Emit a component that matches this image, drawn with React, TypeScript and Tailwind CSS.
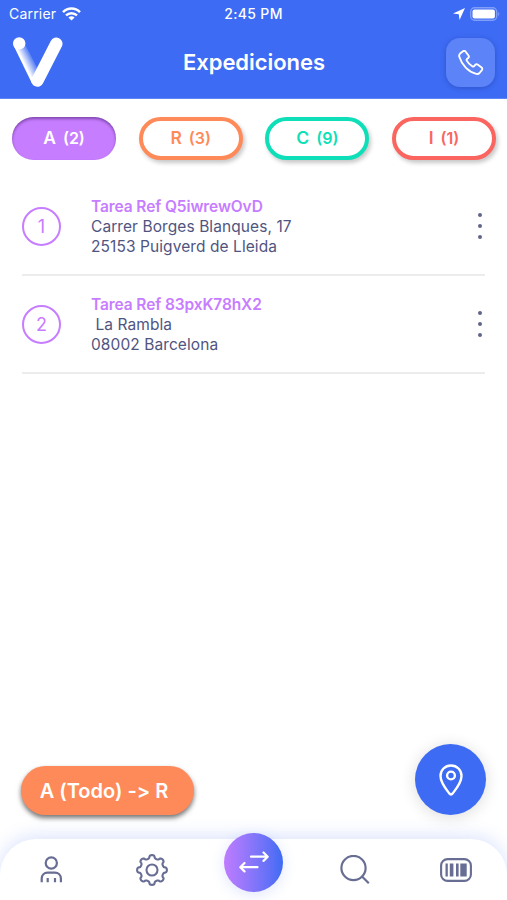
import { useState } from 'react'
import clsx from 'clsx'

interface Task {
  id: number
  ref: string
  street: string
  city: string
}

const filters = [
  { key: 'A', count: 2, color: 'border-[#c77dff] text-[#c77dff]' },
  { key: 'R', count: 3, color: 'border-[#ff8a59] text-[#ff8a59]' },
  { key: 'C', count: 9, color: 'border-[#0fdfb9] text-[#0fdfb9]' },
  { key: 'I', count: 1, color: 'border-[#fb6560] text-[#fb6560]' },
]

const tasks: Task[] = [
  { id: 1, ref: 'Q5iwrewOvD', street: 'Carrer Borges Blanques, 17', city: '25153 Puigverd de Lleida' },
  { id: 2, ref: '83pxK78hX2', street: ' La Rambla', city: '08002 Barcelona' },
]

// Scalloped ring with eight lobes
const gearPath =
  Array.from({ length: 128 }, (_, i) => {
    const t = (i / 128) * Math.PI * 2
    const angle = t + 0.045 * Math.sin(16 * t)
    const radius = 13.3 + 1.6 * Math.cos(8 * t)
    const x = 17 + radius * Math.sin(angle)
    const y = 17 - radius * Math.cos(angle)
    return `${i === 0 ? 'M' : 'L'}${x.toFixed(2)} ${y.toFixed(2)}`
  }).join('') + 'z'

function StatusBar() {
  return (
    <div className="grid grid-cols-3 items-center h-7 px-[9px] text-[14px] leading-none">
      <div className="flex items-center gap-[6px]">
        <span className="tracking-[0.2px]">Carrier</span>
        <svg width="19" height="14" viewBox="0 0 19 14" fill="none" stroke="currentColor" strokeWidth="2.5">
          <path d="M1 5.1C5.8.3 13.2.3 18 5.1" />
          <path d="M4 8.4c3.2-3 7.8-3 11 0" />
          <path d="M9.5 13.6 6.4 10.5c1.8-1.7 4.4-1.7 6.2 0z" fill="currentColor" stroke="none" />
        </svg>
      </div>
      <span className="text-center text-[14px] font-medium tracking-[0.35px] whitespace-nowrap">2:45 PM</span>
      <div className="flex items-center justify-end gap-[5px]">
        <svg width="12" height="12" viewBox="0 0 11 11" fill="currentColor">
          <path d="M11 0 6 11 5.3 5.7 0 5z" />
        </svg>
        <svg width="30" height="14" viewBox="0 0 30 14" className="-mr-[2px]">
          <rect x=".7" y=".7" width="26" height="12.6" rx="4" fill="none" stroke="#fff" strokeOpacity=".35" strokeWidth="1.4" />
          <rect x="2.5" y="2.4" width="22.4" height="9.2" rx="2" fill="#fff" />
          <path d="M28.3 5v4.2c1.3-.7 1.3-3.5 0-4.2z" fill="#fff" fillOpacity=".4" />
        </svg>
      </div>
    </div>
  )
}

function Logo() {
  return (
    <svg width="50" height="51" viewBox="0 0 50 51" fill="none">
      <defs>
        <linearGradient id="stroke-fade" gradientUnits="userSpaceOnUse" x1="11" y1="26" x2="21" y2="21">
          <stop offset="0" stopColor="#fff" />
          <stop offset="1" stopColor="#fff" stopOpacity="0" />
        </linearGradient>
      </defs>
      <path d="M.8 9 19 46.5 28 38 12 7z" fill="url(#stroke-fade)" />
      <circle cx="6.2" cy="6.4" r="6.2" fill="#fff" />
      <path d="M43.3 6.7 24.5 43.5" stroke="#fff" strokeWidth="12.4" strokeLinecap="round" />
    </svg>
  )
}

function Header() {
  return (
    <header className="h-[98px] bg-[#3d6bf4] text-white border-b border-[#5f85f6] box-content">
      <StatusBar />
      <div className="grid grid-cols-[1fr_auto_1fr] items-center h-[69px] pl-[13px] pr-[12px]">
        <Logo />
        <h1 className="text-[22px] font-semibold tracking-[-0.05px]">Expediciones</h1>
        <button
          className="justify-self-end flex items-center justify-center size-[49px] rounded-[14px] bg-[#5c83f7] shadow-[0_1px_5px_rgba(20,40,120,0.35)]"
          aria-label="Llamar"
        >
          <svg width="26" height="26" viewBox="0 0 26 26" fill="none" stroke="currentColor" strokeWidth="1.9" strokeLinejoin="round">
            <path d="M2.1 3.6 5 1.2c.8-.6 1.9-.5 2.5.3l3 4c.6.8.5 1.8-.3 2.4l-1 .8c-.7.6-.8 1.4-.3 2.2 1.2 2.1 3.1 4 5.3 5.3.8.5 1.6.4 2.2-.3l.8-1c.6-.8 1.6-.9 2.4-.3l4 3c.8.6.9 1.7.3 2.5l-2.4 2.9c-.8.9-2 1.2-3.2.9C10.6 22 4 15.4 1.4 7c-.4-1.2-.2-2.6.7-3.4z" />
          </svg>
        </button>
      </div>
    </header>
  )
}

function TaskRow({ task }: { task: Task }) {
  return (
    <li className="flex items-center h-[98px] mx-[22px] border-b-2 border-[#ececee]">
      <div className="flex items-center justify-center size-[39px] rounded-full border-2 border-[#c77dff] text-[18px] text-[#c77dff]">
        {task.id}
      </div>
      <div className="flex-1 ml-[30px] pt-[2px] text-[15.5px] leading-[20.2px] tracking-[0.08px] whitespace-pre text-[#50557f]">
        <p className="font-semibold tracking-[-0.1px] text-[#c77dff]">Tarea Ref {task.ref}</p>
        <p>{task.street}</p>
        <p>{task.city}</p>
      </div>
      <button className="flex flex-col gap-[7px] pr-[3px]" aria-label="Opciones">
        <span className="size-1 rounded-full bg-[#62658a]" />
        <span className="size-1 rounded-full bg-[#62658a]" />
        <span className="size-1 rounded-full bg-[#62658a]" />
      </button>
    </li>
  )
}

function BottomNav() {
  return (
    <nav className="h-[61px] rounded-t-[36px] bg-white grid grid-cols-5 items-center text-[#686d93] shadow-[0_-3px_18px_rgba(61,107,244,0.18)]">
      <button className="flex justify-center" aria-label="Perfil">
        <svg width="24" height="28" viewBox="0 0 24 28" fill="none" stroke="currentColor" strokeWidth="2.2">
          <circle cx="12.3" cy="7" r="5.6" />
          <path d="M2.7 26.2v-3.6c0-3.8 2.6-6 6-6h7.2c3.4 0 6 2.2 6 6v3.6M8.7 22v4.2M16 22v4.2" />
        </svg>
      </button>
      <button className="flex justify-center" aria-label="Ajustes">
        <svg width="34" height="34" viewBox="0 0 34 34" fill="none" stroke="currentColor" strokeWidth="2.1" strokeLinejoin="round">
          <path d={gearPath} />
          <circle cx="17" cy="17" r="5.5" />
        </svg>
      </button>
      <button
        className="justify-self-center flex items-center justify-center size-[59px] -mt-[15px] ml-px rounded-full text-white bg-linear-to-r from-[#bf7bff] to-[#3d6bf4] shadow-[0_3px_14px_rgba(61,107,244,0.16)]"
        aria-label="Expediciones"
      >
        <svg width="30" height="22" viewBox="0 0 30 22" fill="none" stroke="currentColor" strokeWidth="2.2" strokeLinecap="round" strokeLinejoin="round">
          <path d="M12 5.7h16.500M24.500 1.500l4.200 4.200-4.200 4.200M18.500 16.200H1.500M5.500 12l-4.200 4.200 4.200 4.200" />
        </svg>
      </button>
      <button className="flex justify-center" aria-label="Buscar">
        <svg width="30" height="30" viewBox="0 0 30 30" fill="none" stroke="currentColor" strokeWidth="2.2">
          <circle cx="13.5" cy="13" r="12.1" />
          <path d="m22 21.5 6.8 6.8" />
        </svg>
      </button>
      <button className="flex justify-center" aria-label="Escanear">
        <svg width="32" height="24" viewBox="0 0 32 24" fill="currentColor">
          <rect x="1.1" y="1.1" width="29.8" height="21.8" rx="6.5" fill="none" stroke="currentColor" strokeWidth="2.1" />
          <path d="M5.500 5.500h2.300v13H5.500zM9.800 5.500h3.600v13H9.800zM16 5.500h2.600v13H16zM20.300 5.500h6.400v13h-6.400z" />
        </svg>
      </button>
    </nav>
  )
}

export default function App() {
  const [active, setActive] = useState('A')

  return (
    <div className="flex flex-col w-full h-screen overflow-hidden bg-white font-['Inter',sans-serif]">
      <Header />

      {/* Filters */}
      <div className="flex justify-between pt-[18px] pl-[12px] pr-[11px]">
        {filters.map((filter) => (
          <button
            key={filter.key}
            onClick={() => setActive(filter.key)}
            className={clsx(
              'flex items-center justify-center gap-[7px] w-[104px] h-[43px] rounded-full font-semibold',
              active === filter.key
                ? 'bg-[#c77dff] text-white shadow-[inset_0_2px_3px_rgba(70,30,110,0.55)]'
                : ['border-4 bg-white shadow-[2px_3px_4px_rgba(0,0,0,0.22)]', filter.color]
            )}
          >
            <span className="text-[17.5px]">{filter.key}</span>
            <span className="text-[16px] leading-none pb-px">({filter.count})</span>
          </button>
        ))}
      </div>

      {/* Task list */}
      <ul className="flex-1 pt-[18px]">
        {tasks.map((task) => (
          <TaskRow key={task.id} task={task} />
        ))}
      </ul>

      {/* Floating actions */}
      <div className="flex items-end justify-between px-[21px] pb-[24px]">
        <button className="w-[173px] h-[49px] rounded-full bg-[#ff8a59] text-white text-[20px] font-semibold pr-[7px] [font-feature-settings:'calt'_0] shadow-[0_3px_5px_rgba(0,0,0,0.55)]">
          A (Todo) -&gt; R
        </button>
        <button
          className="flex items-center justify-center size-[71px] rounded-full bg-[#3d6bf4] text-white shadow-[0_2px_16px_rgba(0,0,0,0.14)]"
          aria-label="Mapa"
        >
          <svg width="24" height="32" viewBox="0 0 24 32" fill="none" stroke="currentColor" strokeWidth="2.4" strokeLinejoin="round">
            <path d="M12 1.500C6 1.500 1.500 6 1.500 12c0 6.500 5 12.500 8.700 17.300 1.100 1.500 2.500 1.500 3.600 0C17.500 24.500 22.500 18.500 22.500 12 22.500 6 18 1.500 12 1.500z" />
            <circle cx="12" cy="11.5" r="3.9" />
          </svg>
        </button>
      </div>

      <BottomNav />
    </div>
  )
}
